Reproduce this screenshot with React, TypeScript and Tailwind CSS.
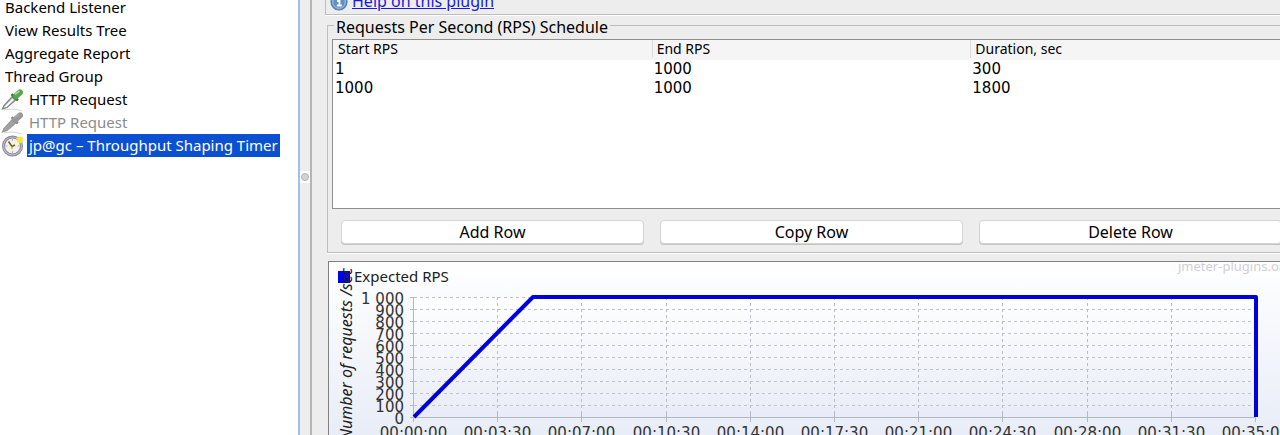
import React from "react";

const treeItems = [
  { label: "Backend Listener" },
  { label: "View Results Tree" },
  { label: "Aggregate Report" },
  { label: "Thread Group" },
  { label: "HTTP Request", icon: "sampler" },
  { label: "HTTP Request", icon: "sampler-off" },
  { label: "jp@gc – Throughput Shaping Timer", icon: "timer" },
];

const schedule = [
  ["1", "1000", "300"],
  ["1000", "1000", "1800"],
];

const yTicks = ["1 000", "900", "800", "700", "600", "500", "400", "300", "200", "100", "0"];
const xTicks = [
  "00:00:00", "00:03:30", "00:07:00", "00:10:30", "00:14:00", "00:17:30",
  "00:21:00", "00:24:30", "00:28:00", "00:31:30", "00:35:00",
];

function Dropper({ off = false }: { off?: boolean }) {
  return (
    <svg viewBox="0 0 24 24" className="h-6 w-6 shrink-0" aria-hidden="true">
      <path d="M4 22 Q14 20 22 23" stroke="#dcdcdc" strokeWidth="1.2" fill="none" />
      <path d="M2.5 21 4 17.500 12 9 15.500 12 7 19.500Z" fill={off ? "#a6a6a6" : "#d9dcdd"} stroke={off ? "#979797" : "#7d8183"} strokeWidth="1.300" />
      <path d="M6 18.500 13 11.500" stroke={off ? "#a0a0a0" : "#ffffff"} strokeWidth="1.200" />
      <path d="M12.500 7 17 11.500" stroke={off ? "#8f8f8f" : "#3f7a3c"} strokeWidth="3" strokeLinecap="round" />
      <path d="M16 8 20 4.500" stroke={off ? "#999999" : "#5aa54e"} strokeWidth="6" strokeLinecap="round" />
      <path d="M15.500 6 19 3.500" stroke={off ? "#a8a8a8" : "#9fd48f"} strokeWidth="1.800" strokeLinecap="round" />
    </svg>
  );
}

function TimerIcon() {
  return (
    <svg viewBox="0 0 24 24" className="h-6 w-6 shrink-0" aria-hidden="true">
      <circle cx="12.500" cy="12" r="9" fill="#f4f2e6" stroke="#85859a" strokeWidth="3" />
      <circle cx="12.500" cy="12" r="9" fill="none" stroke="#bcbccd" strokeWidth="1.200" />
      <path d="M12.500 5v2M12.500 17v2M5.500 12h2M17.500 12h2" stroke="#b4b4b0" strokeWidth="1" />
      <path d="M8.500 7.500 12 12.500l3-1.500" stroke="#6b5f2a" strokeWidth="1.500" fill="none" />
      <path d="M12 12.500v2.500" stroke="#c9b84a" strokeWidth="1.400" />
      <path d="M16 4.500 18.500 2.500l4 .5.500 4-2 2.500-3.500-1.500Z" fill="#f1e53f" />
    </svg>
  );
}

function InfoIcon() {
  return (
    <svg viewBox="0 0 18 18" className="h-[18px] w-[18px] shrink-0" aria-hidden="true">
      <circle cx="9" cy="9" r="8" fill="#5f8fc4" stroke="#5a7da8" strokeWidth="1.200" />
      <circle cx="9" cy="9" r="6.300" fill="none" stroke="#a9c6e6" strokeWidth="1" />
      <path d="M7 8h2.500v4.500M6.800 12.500h5" stroke="#fff" strokeWidth="1.800" fill="none" />
      <circle cx="9" cy="5" r="1.200" fill="#fff" />
    </svg>
  );
}

function Chart() {
  const left = 85;
  const stepX = 84.2;
  return (
    <svg viewBox="0 0 965 220" className="block w-full text-[15px]" role="img" aria-label="Expected RPS over time">
      <defs>
        <linearGradient id="plot" x1="0" y1="0" x2="0" y2="1">
          <stop offset="0" stopColor="#ffffff" />
          <stop offset="1" stopColor="#e8ecf6" />
        </linearGradient>
      </defs>
      <rect x={left} y="35" width="842" height="120" fill="url(#plot)" />
      {yTicks.map((t, i) => (
        <g key={t}>
          {i < 10 && <path d={`M${left} ${35.5 + i * 12}H927`} stroke="#c0c3cd" strokeDasharray="3 3" />}
          <path d={`M${left - 4} ${35.5 + i * 12}h4`} stroke="#b4b8c4" />
          <text x="75" y={42 + i * 12} textAnchor="end" className="fill-[#333] font-['DejaVu_Sans',sans-serif]">{t}</text>
        </g>
      ))}
      {xTicks.map((t, i) => {
        const x = Math.round(left + i * stepX) - 0.5;
        return (
          <g key={t}>
            {i > 0 && <path d={`M${x} 35V155`} stroke="#b9bcc8" strokeDasharray="3 3" />}
            <path d={`M${x} 151v9`} stroke="#b4b8c4" />
            <text x={x} y="176" textAnchor="middle" className="fill-[#333] font-['DejaVu_Sans',sans-serif]">{t}</text>
          </g>
        );
      })}
      <path d="M84.500 35V155.500H927" fill="none" stroke="#b4b8c4" />
      <path d="M85 155 204 35H927V155" fill="none" stroke="#0000dd" strokeWidth="4" strokeLinejoin="round" />
      <rect x="9" y="9" width="12" height="12" fill="#0000ee" />
      <text x="25" y="20" className="fill-[#222]">Expected RPS</text>
      <text transform="translate(23 6) rotate(-90)" textAnchor="end" className="fill-[#222] text-base italic">Number of requests /sec</text>
      <text x="849" y="9" className="fill-[#d0d0d4] text-[13px]">jmeter-plugins.org</text>
    </svg>
  );
}

export default function App() {
  return (
    <div className="flex h-screen overflow-hidden bg-[#ededed] font-['Noto_Sans','Liberation_Sans',sans-serif] text-base text-black">
      <nav className="w-[300px] shrink-0 border-r-2 border-[#9cc3e6] bg-white text-[15px]" aria-label="Test plan">
        <ul className="-mt-1">
          {treeItems.map((item, i) => (
            <li key={i} className="flex h-[23px] items-center">
              {item.icon ? (
                <span className="flex w-[27px] shrink-0">
                  {item.icon === "timer" ? <TimerIcon /> : <Dropper off={item.icon === "sampler-off"} />}
                </span>
              ) : (
                <span className="w-[3px] shrink-0" />
              )}
              <span
                className={
                  "flex h-full items-center whitespace-nowrap px-[2px] " +
                  (item.icon === "timer" ? "bg-[#0b50d0] text-white" : item.icon === "sampler-off" ? "text-[#8c8c8c]" : "")
                }
              >
                {item.label}
              </span>
            </li>
          ))}
        </ul>
      </nav>

      <div className="flex w-[10px] shrink-0 flex-col pt-[171px]" role="separator">
        <span className="flex h-3 items-center justify-center bg-white">
          <span className="h-2 w-2 rounded-full border border-[#b4b4b4] bg-[#d2d2d2]" />
        </span>
      </div>

      <main className="min-w-0 flex-1 overflow-hidden border-l-2 border-[#b5b5b5] pl-[13px]">
        <div className="-mr-[15px]">
          <div className="-mt-[9px] flex h-6 items-start gap-1 border-b border-l border-[#bdbdbd] pt-[2px] pl-1 shadow-[0_1px_0_#fff]">
            <InfoIcon />
            <a href="#help" className="leading-4 text-[#1a1ad8] underline">Help on this plugin</a>
          </div>

          <fieldset className="ml-[2px] border border-[#bdbdbd] px-1 pt-1 pb-2 shadow-[0_1px_0_#fff]">
            <legend className="ml-[2px] px-[2px] pt-1 leading-4">Requests Per Second (RPS) Schedule</legend>
            <div className="h-[170px] border border-[#8e8e8e] bg-white">
              <table className="w-full table-fixed border-collapse text-left">
                <thead className="bg-[#f5f5f5] text-[14px]">
                  <tr>
                    {["Start RPS", "End RPS", "Duration, sec"].map((h) => (
                      <th key={h} className="p-0 font-normal">
                        <div className="flex h-5 items-start">
                          <span className="border-l border-[#dcdcdc] pl-1 leading-[18px] in-[th:first-child]:border-transparent">{h}</span>
                        </div>
                      </th>
                    ))}
                  </tr>
                </thead>
                <tbody className="font-['DejaVu_Sans',sans-serif] text-[15px]">
                  {schedule.map((row, i) => (
                    <tr key={i}>
                      {row.map((c, j) => (
                        <td key={j} className="p-0 pl-[2px] leading-[19px]">{c}</td>
                      ))}
                    </tr>
                  ))}
                </tbody>
              </table>
            </div>
            <div className="grid grid-cols-3 gap-4 pt-[11px] pr-2 pl-[9px]">
              {["Add Row", "Copy Row", "Delete Row"].map((b) => (
                <button key={b} type="button" className="h-6 rounded border border-[#d4d4d4] bg-white leading-5 shadow-[0_1px_0_#c4c4c4]">
                  {b}
                </button>
              ))}
            </div>
          </fieldset>

          <div className="mt-2 ml-[3px] border border-[#808080] bg-linear-to-b from-white to-[#e2e8f5]">
            <Chart />
          </div>
        </div>
      </main>
    </div>
  );
}
